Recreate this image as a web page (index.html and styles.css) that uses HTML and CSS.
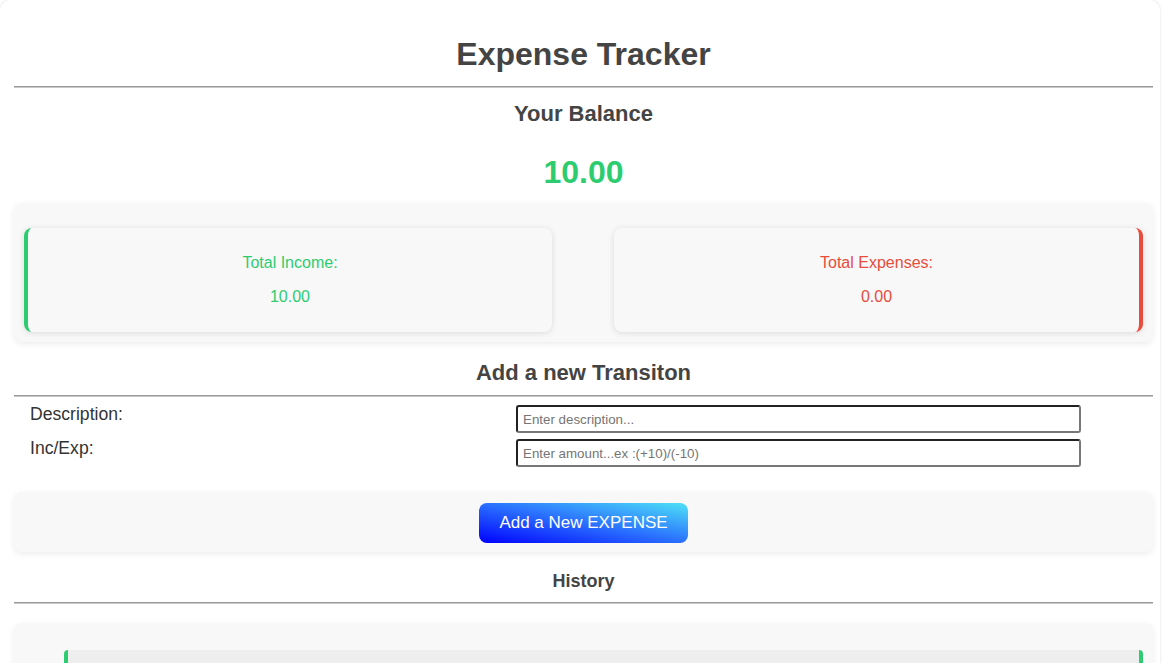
FILE: index.html
```html
<!DOCTYPE html>
<html>
<head>
<meta charset="utf-8">
<title>Expense Tracker</title>
<link rel="stylesheet" href="styles.css">
</head>
<body>
<div class="app">
  <h1 class="title">Expense Tracker</h1>
  <hr class="rule">
  <h3 class="balance-label">Your Balance</h3>
  <div class="balance">10.00</div>

  <div class="panel summary">
    <div class="card card-income">
      <p class="card-label">Total Income:</p>
      <p class="card-value">10.00</p>
    </div>
    <div class="card card-expense">
      <p class="card-label">Total Expenses:</p>
      <p class="card-value">0.00</p>
    </div>
  </div>

  <h3 class="section-title">Add a new Transiton</h3>
  <hr class="rule rule-tight">
  <div class="form">
    <label class="form-label" for="desc">Description:</label>
    <input class="form-input" id="desc" type="text" placeholder="Enter description...">
    <label class="form-label" for="amt">Inc/Exp:</label>
    <input class="form-input" id="amt" type="text" placeholder="Enter amount...ex :(+10)/(-10)">
  </div>

  <div class="panel actions">
    <button class="add-btn" type="button">Add a New EXPENSE</button>
  </div>

  <h4 class="history-title">History</h4>
  <hr class="rule rule-tight">
  <div class="panel history">
    <ul class="history-list">
      <li class="history-item plus"><span>&nbsp;</span><span>&nbsp;</span></li>
    </ul>
  </div>
</div>
</body>
</html>
```

FILE: styles.css
```css
* { box-sizing: border-box; }

html, body {
  margin: 0;
  padding: 0;
  background: #ffffff;
  font-family: "Liberation Sans", Arial, sans-serif;
  color: #444;
}

.app {
  margin-right: 8px;
  padding: 0 7px 40px 14px;
  background: #fff;
  border-radius: 10px;
  box-shadow: 0 0 3px rgba(0, 0, 0, 0.12);
}

.title {
  margin: 0;
  padding-top: 36px;
  font-size: 32px;
  line-height: 37px;
  font-weight: bold;
  text-align: center;
  color: #444;
}

.rule {
  margin: 13px 0 0;
  height: 0;
  border: 0;
  border-top: 1px solid #9a9a9a;
  border-bottom: 1px solid #c8c8c8;
}

.rule-tight { margin-top: 10.5px; }

.balance-label {
  margin: 12.5px 0 0;
  font-size: 22px;
  line-height: 25px;
  text-align: center;
  color: #444;
}

.balance {
  margin-top: 28px;
  font-size: 32px;
  line-height: 37px;
  font-weight: bold;
  text-align: center;
  color: #2ecc71;
}

.panel {
  background: #f8f8f8;
  border-radius: 8px;
  box-shadow: 0 2px 6px rgba(0, 0, 0, 0.08);
}

.summary {
  margin-top: 12.5px;
  padding: 25px 10px 10px;
  display: grid;
  grid-template-columns: 528px 529px;
  justify-content: space-between;
}

.card {
  background: #f8f8f8;
  border-radius: 8px;
  box-shadow: 0 1px 6px rgba(0, 0, 0, 0.12);
  padding: 26px 0 26px;
  text-align: center;
  font-size: 16px;
  line-height: 18px;
  display: flex;
  flex-direction: column;
  gap: 16px;
}

.card-label, .card-value { margin: 0; }

.card-income {
  border-left: 4px solid #2ecc71;
  color: #2ecc71;
}

.card-expense {
  border-right: 4px solid #e74c3c;
  color: #e74c3c;
}

.section-title {
  margin: 17.5px 0 0;
  font-size: 22px;
  line-height: 25px;
  text-align: center;
  color: #444;
}

.form {
  margin-top: 8px;
  padding-left: 16px;
  display: grid;
  grid-template-columns: 486px 565px;
  row-gap: 6px;
  align-items: start;
}

.form-label {
  font-size: 17.6px;
  line-height: 18px;
  color: #333;
}

.form-input {
  height: 28px;
  width: 565px;
  padding: 0 5px;
  font-family: "Liberation Sans", Arial, sans-serif;
  font-size: 13.33px;
  color: #333;
  background: #fff;
  border: 2px solid;
  border-color: #222 #777 #777 #222;
  border-radius: 3px;
  outline: none;
}

.form-input::placeholder { color: #757575; }

.actions {
  margin-top: 25px;
  padding: 11px 0 9px;
  display: flex;
  justify-content: center;
}

.add-btn {
  height: 40px;
  padding: 0 20px;
  border: 0;
  border-radius: 8px;
  background: linear-gradient(to top right, #0000ff 0%, #2a70ff 50%, #4ee2f6 100%);
  color: #fff;
  font-family: "Liberation Sans", Arial, sans-serif;
  font-size: 17px;
  cursor: pointer;
}

.history-title {
  margin: 18.5px 0 0;
  font-size: 18px;
  line-height: 21px;
  text-align: center;
  color: #444;
}

.history {
  margin-top: 19px;
  padding: 27px 10px 20px;
}

.history-list {
  margin: 0;
  padding: 0 0 0 40px;
  list-style: none;
}

.history-item {
  display: flex;
  justify-content: space-between;
  padding: 12px 10px;
  background: #eeeeee;
  border-radius: 4px;
  font-size: 16px;
}

.history-item.plus {
  border-left: 4px solid #2ecc71;
  border-right: 4px solid #2ecc71;
}
```
